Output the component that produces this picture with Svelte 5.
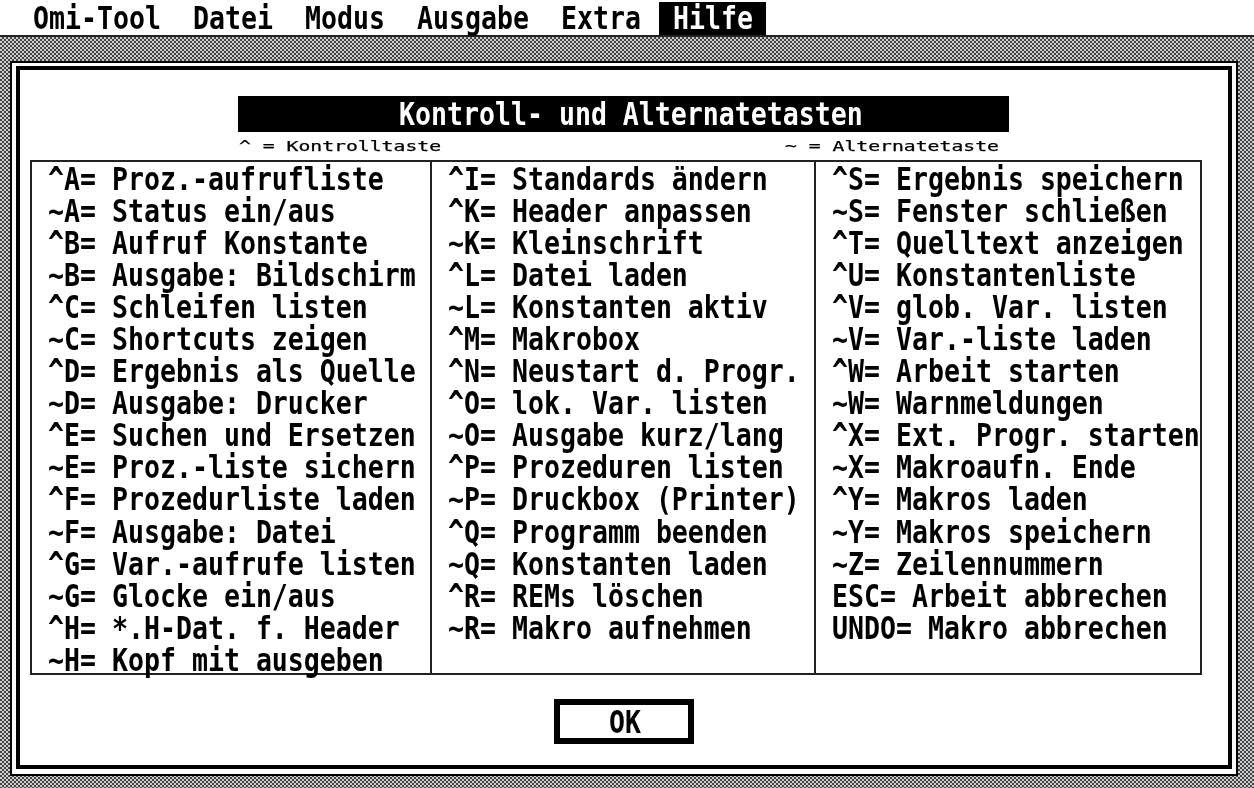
<script>
    const menus = ["Omi-Tool", "Datei", "Modus", "Ausgabe", "Extra"];

    const columns = [
        [
            "^A= Proz.-aufrufliste",
            "~A= Status ein/aus",
            "^B= Aufruf Konstante",
            "~B= Ausgabe: Bildschirm",
            "^C= Schleifen listen",
            "~C= Shortcuts zeigen",
            "^D= Ergebnis als Quelle",
            "~D= Ausgabe: Drucker",
            "^E= Suchen und Ersetzen",
            "~E= Proz.-liste sichern",
            "^F= Prozedurliste laden",
            "~F= Ausgabe: Datei",
            "^G= Var.-aufrufe listen",
            "~G= Glocke ein/aus",
            "^H= *.H-Dat. f. Header",
            "~H= Kopf mit ausgeben",
        ],
        [
            "^I= Standards ändern",
            "^K= Header anpassen",
            "~K= Kleinschrift",
            "^L= Datei laden",
            "~L= Konstanten aktiv",
            "^M= Makrobox",
            "^N= Neustart d. Progr.",
            "^O= lok. Var. listen",
            "~O= Ausgabe kurz/lang",
            "^P= Prozeduren listen",
            "~P= Druckbox (Printer)",
            "^Q= Programm beenden",
            "~Q= Konstanten laden",
            "^R= REMs löschen",
            "~R= Makro aufnehmen",
        ],
        [
            "^S= Ergebnis speichern",
            "~S= Fenster schließen",
            "^T= Quelltext anzeigen",
            "^U= Konstantenliste",
            "^V= glob. Var. listen",
            "~V= Var.-liste laden",
            "^W= Arbeit starten",
            "~W= Warnmeldungen",
            "^X= Ext. Progr. starten",
            "~X= Makroaufn. Ende",
            "^Y= Makros laden",
            "~Y= Makros speichern",
            "~Z= Zeilennummern",
            "ESC= Arbeit abbrechen",
            "UNDO= Makro abbrechen",
        ],
    ];
</script>

<div class="screen">
    <nav class="menubar">
        {#each menus as item}
            <span class="menu" style="width: {item.length * 16}px"><span class="tall">{item}</span></span>
        {/each}
        <span class="menu active"><span class="tall">Hilfe</span></span>
    </nav>

    <main class="desktop">
        <section class="dialog">
            <div class="inner">
                <h1 class="title"><span class="tall">Kontroll- und Alternatetasten</span></h1>

                <div class="legend">
                    <span class="small">^ = Kontrolltaste</span>
                    <span class="small">~ = Alternatetaste</span>
                </div>

                <div class="table">
                    {#each columns as lines}
                        <div class="col">
                            {#each lines as line}
                                <div class="line"><span class="tall">{line}</span></div>
                            {/each}
                        </div>
                    {/each}
                </div>

                <div class="actions">
                    <button class="ok"><span class="tall">OK</span></button>
                </div>
            </div>
        </section>
    </main>
</div>

<style>
    :global(body) {
        margin: 0;
        background: #fff;
    }

    .screen {
        width: 1254px;
        height: 788px;
        overflow: hidden;
        display: flex;
        flex-direction: column;
        color: #000;
        background: #fff;
        font-family: "DejaVu Sans Mono", "Liberation Mono", monospace;
        font-weight: 700;
        font-size: 32px;
        filter: blur(0.45px);
    }

    /* the Atari system font is tall and narrow: 16px pitch, 24px caps */
    .tall {
        display: inline-block;
        white-space: pre;
        transform: scaleX(0.83);
        transform-origin: left center;
    }

    .menubar {
        height: 35px;
        flex: none;
        display: flex;
        padding-left: 17px;
        border-bottom: 2px solid #222;
        line-height: 36px;
    }

    .menu {
        padding: 0 16px;
    }

    .menu.active {
        width: 80px;
        margin: 2px 0 0 2px;
        padding: 0 13px 0 14px;
        background: #000;
        color: #fff;
        line-height: 32px;
    }

    .desktop {
        flex: 1;
        padding: 24px 16px 0 10px;
        background: repeating-conic-gradient(#444 0 25%, #ccc 0 50%) 0 0 / 4px 4px;
    }

    .dialog {
        height: 715px;
        box-sizing: border-box;
        border: 2px solid #000;
        padding: 3px 4px 5px;
        background: #fff;
    }

    .inner {
        height: 100%;
        box-sizing: border-box;
        border: 4px solid #000;
        padding: 26px 26px 0 10px;
    }

    .title {
        width: 771px;
        height: 36px;
        box-sizing: border-box;
        margin: 0 0 0 208px;
        padding-left: 161px;
        background: #000;
        color: #fff;
        font: inherit;
        line-height: 36px;
    }

    .legend {
        width: 760px;
        height: 28px;
        margin-left: 209px;
        display: flex;
        justify-content: space-between;
        align-items: center;
    }

    .small {
        width: 214px;
        white-space: pre;
        font-size: 14px;
        font-weight: 400;
        transform: scaleX(1.41);
        transform-origin: left center;
        -webkit-text-stroke: 0.25px #000;
    }

    .table {
        height: 515px;
        box-sizing: border-box;
        border: 2px solid #222;
        display: grid;
        grid-template-columns: 398px 384px 1fr;
        grid-template-rows: 511px;
    }

    .col {
        padding: 1px 0 0 16px;
        min-width: 0;
    }

    .col + .col {
        border-left: 2px solid #222;
    }

    .line {
        height: 32.05px;
        line-height: 32.05px;
    }

    .actions {
        display: flex;
        justify-content: center;
        padding: 24px 0 0 15px;
    }

    .ok {
        width: 140px;
        height: 45px;
        box-sizing: border-box;
        border: 6px solid #000;
        border-radius: 0;
        padding: 0 0 0 49px;
        background: #fff;
        color: #000;
        font: inherit;
        line-height: 32px;
        text-align: left;
    }
</style>
